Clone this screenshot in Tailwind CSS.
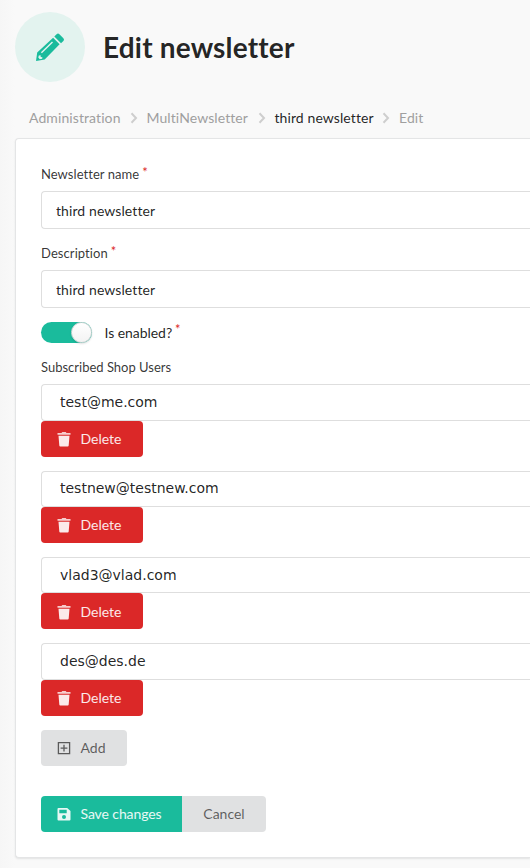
<!DOCTYPE html>
<html lang="en">
<head>
<meta charset="utf-8">
<title>Edit newsletter</title>
<script src="https://cdn.jsdelivr.net/npm/@tailwindcss/browser@4"></script>
</head>
<body class="h-[868px] overflow-hidden bg-[#f9f9f9] font-[Lato,sans-serif] text-[14px] leading-[18px] text-black/87 [font-variant-ligatures:none]">
<svg class="hidden">
  <symbol id="trash" viewBox="0 0 14 16"><path d="M1.500 4.700h11l-.8 9.800a1 1 0 0 1-1 .9H3.300a1 1 0 0 1-1-.9z"/><path opacity=".85" d="M.5 2h4L5.300 1h3.400l.8 1h4v1.700H.5z"/></symbol>
  <symbol id="chevron" viewBox="0 0 8 12"><path d="M1.500 1.300 6 6l-4.500 4.700" fill="none" stroke="currentColor" stroke-width="2"/></symbol>
</svg>
<div class="h-[868px] w-full bg-[linear-gradient(to_right,#f6f6f6_0,#f9f9f9_15px)] pl-[15px] pt-3">
  <header class="flex h-[70px] items-center">
    <div class="flex size-[70px] items-center justify-center rounded-full bg-[#e3f3ef]">
      <svg class="size-[30px] text-[#1abb9c]" viewBox="0 0 30 30" fill="currentColor"><path fill-rule="evenodd" d="M18.100 5.200l6.500 6.500L9.700 26.800 1 28.500 2.200 19.800zM3.800 22.800 3.300 25l1.500 1.600 2.400-.5.200-1.500-1.700-.2-.1-1.700zM17 8.800 5.900 19.600l1 1L18 9.800zM19.300 3.900l2.300-2.300q1.400-1.300 2.800 0l4 4q1.300 1.400 0 2.800L26 10.600z" transform="translate(0 .6)"/></svg>
    </div>
    <h1 class="ml-[18px] text-[28px] font-bold leading-9 tracking-[0.180px]">Edit newsletter</h1>
  </header>
  <nav class="mt-[27px] flex h-[18px] items-center whitespace-nowrap pl-[14px] tracking-[0.090px] text-[#9f9f9f]">
    <span class="w-[92px]">Administration</span><svg class="ml-[9px] mr-[8.500px] h-3 w-2 text-[#cecece]"><use href="#chevron"/></svg>
    <span class="w-[102px]">MultiNewsletter</span><svg class="mx-[9px] h-3 w-2 text-[#cecece]"><use href="#chevron"/></svg>
    <span class="w-[99px] text-black/87">third newsletter</span><svg class="ml-[8.500px] mr-[9px] h-3 w-2 text-[#cecece]"><use href="#chevron"/></svg>
    <span>Edit</span>
  </nav>
  <main class="mt-[11px] h-[720px] rounded-l-[4px] border border-r-0 border-[#e4e5e6] bg-white pl-[25px] pt-[26px] shadow-[0_1px_2px_0_rgba(34,36,38,0.10)]">
    <label class="flex h-[18px] text-[13px] text-black/80"><span class="tracking-[0.050px]">Newsletter name</span><span class="-mt-[2px] ml-[3px] text-[#db2828]">*</span></label>
    <input class="mt-2 block h-[38px] w-full rounded-l-[4px] border border-r-0 border-[#dedede] px-[14px] tracking-[0.090px]" value="third newsletter">
    <label class="mt-[15px] flex h-[18px] text-[13px] text-black/80"><span class="tracking-[0.080px]">Description</span><span class="-mt-[2px] ml-[3px] text-[#db2828]">*</span></label>
    <input class="mt-2 block h-[38px] w-full rounded-l-[4px] border border-r-0 border-[#dedede] px-[14px] tracking-[0.090px]" value="third newsletter">
    <div class="mt-[14px] flex h-[21px] items-center">
      <div class="flex h-[21px] w-[51px] justify-end rounded-full bg-[#1abb9c]"><div class="size-[21px] rounded-full border border-[#d6d6d7] bg-[linear-gradient(#fff,#f3f3f3)] shadow-[0_1px_2px_0_rgba(34,36,38,0.15)]"></div></div>
      <label class="ml-[12.500px] flex h-[18px]"><span class="tracking-[-0.050px]">Is enabled?</span><span class="-mt-[4px] ml-[3px] text-[13px] text-[#db2828]">*</span></label>
    </div>
    <div class="mt-[15px] h-[18px] text-[13px] text-black/80">Subscribed Shop Users</div>
    <div class="mt-[8.300px] flex flex-col gap-[14px]">
      <div>
        <div class="flex h-[36.330px] items-center rounded-l-[4px] border border-r-0 border-[#dedede] pl-[18px] font-['DejaVu_Sans',sans-serif]">test@me.com</div>
        <button class="flex h-9 w-[102px] items-center rounded-[4px] bg-[#db2828] pl-[15.500px] text-white/90"><svg class="mr-[10px] h-4 w-[14px] fill-current"><use href="#trash"/></svg>Delete</button>
      </div>
      <div>
        <div class="flex h-[36.330px] items-center rounded-l-[4px] border border-r-0 border-[#dedede] pb-px pl-[18px] font-['DejaVu_Sans',sans-serif]">testnew@testnew.com</div>
        <button class="flex h-9 w-[102px] items-center rounded-[4px] bg-[#db2828] pl-[15.500px] text-white/90"><svg class="mr-[10px] h-4 w-[14px] fill-current"><use href="#trash"/></svg>Delete</button>
      </div>
      <div>
        <div class="flex h-[36.330px] items-center rounded-l-[4px] border border-r-0 border-[#dedede] pl-[18px] font-['DejaVu_Sans',sans-serif]">vlad3@vlad.com</div>
        <button class="flex h-9 w-[102px] items-center rounded-[4px] bg-[#db2828] pl-[15.500px] pt-px text-white/90"><svg class="mr-[10px] h-4 w-[14px] fill-current"><use href="#trash"/></svg>Delete</button>
      </div>
      <div>
        <div class="flex h-[36.330px] items-center rounded-l-[4px] border border-r-0 border-[#dedede] pl-[18px] font-['DejaVu_Sans',sans-serif]">des@des.de</div>
        <button class="flex h-9 w-[102px] items-center rounded-[4px] bg-[#db2828] pl-[15.500px] text-white/90"><svg class="mr-[10px] h-4 w-[14px] fill-current"><use href="#trash"/></svg>Delete</button>
      </div>
      <button class="flex h-9 w-[86px] items-center rounded-[4px] bg-[#e0e1e2] pl-[15.500px] text-black/60"><svg class="mr-[10px] size-[14px]" viewBox="0 0 14 14" fill="none" stroke="currentColor" stroke-width="1.300"><path d="M1.400 1.600h11.200v11H1.400zM7 3.700v6.800M3.600 7.100h6.800"/></svg>Add</button>
    </div>
    <div class="mt-[30px] flex h-9">
      <button class="flex w-[141px] items-center whitespace-nowrap rounded-l-[4px] bg-[#1abb9c] pl-[15.500px] text-white/90"><svg class="mr-[10px] size-[14px]" viewBox="0 0 14 14" fill="currentColor"><path fill-rule="evenodd" d="M1.500 1h8.700L13.500 4v8.500q0 1-1 1h-11q-1 0-1-1V2q0-1 1-1zM2.300 2.700v3.600h7.400V2.700zM7 8a2 2 0 1 0 0 4 2 2 0 0 0 0-4z"/></svg><span class="tracking-[-0.100px]">Save changes</span></button>
      <button class="w-[84px] rounded-r-[4px] bg-[#e0e1e2] text-black/60">Cancel</button>
    </div>
  </main>
</div>
</body>
</html>
